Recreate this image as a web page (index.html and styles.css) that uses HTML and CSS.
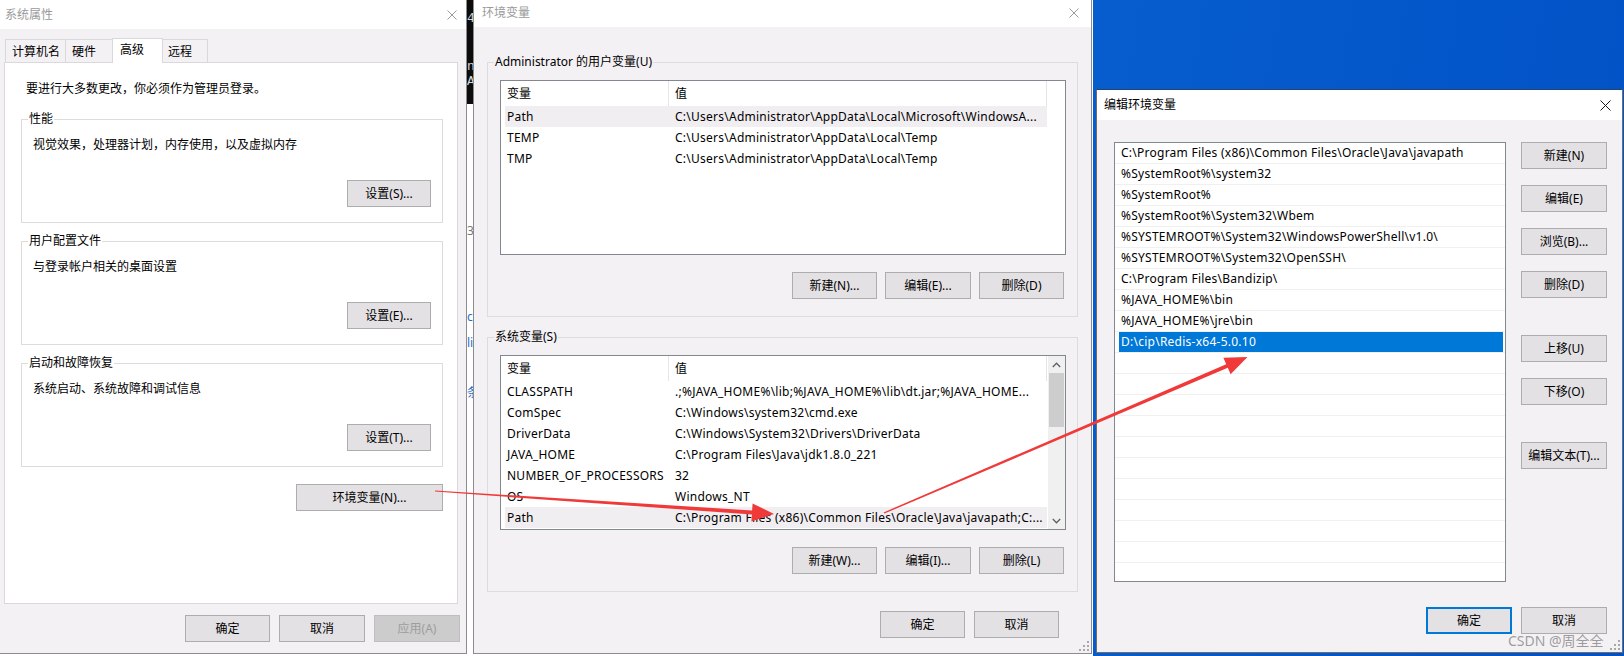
FILE: index.html
```html
<!DOCTYPE html>
<html lang="zh-CN">
<head>
<meta charset="utf-8">
<title>环境变量</title>
<link rel="stylesheet" href="styles.css">
</head>
<body>
<div class="backdrop"></div>
<div class="cmd"><span>4</span><span class="c2">@</span><span class="c3">n</span><span class="c4">A</span></div>
<div class="strip"><span class="s1">3</span><span class="s2">c</span><span class="s3">li</span><span class="s4">条</span></div>

<!-- 系统属性 -->
<div class="win w1">
  <div class="titlebar tb1">
    <span class="title inactive">系统属性</span>
    <svg class="close" width="10" height="10" viewBox="0 0 10 10"><path d="M0.5 0.5L9.5 9.5M9.5 0.5L0.5 9.5" stroke="#9a9a9a" stroke-width="1"/></svg>
  </div>
  <div class="body b1">
    <div class="tabs">
      <div class="tab t1">计算机名</div>
      <div class="tab t2">硬件</div>
      <div class="tab t3 sel">高级</div>
      <div class="tab t4">远程</div>
    </div>
    <div class="panel">
      <p class="intro">要进行大多数更改，你必须作为管理员登录。</p>
      <fieldset class="grp g1">
        <legend>性能</legend>
        <div class="gbody">
          <p class="desc">视觉效果，处理器计划，内存使用，以及虚拟内存</p>
          <button class="btn gbtn">设置(S)...</button>
        </div>
      </fieldset>
      <fieldset class="grp g1 gsp">
        <legend>用户配置文件</legend>
        <div class="gbody">
          <p class="desc">与登录帐户相关的桌面设置</p>
          <button class="btn gbtn">设置(E)...</button>
        </div>
      </fieldset>
      <fieldset class="grp g1 gsp">
        <legend>启动和故障恢复</legend>
        <div class="gbody">
          <p class="desc">系统启动、系统故障和调试信息</p>
          <button class="btn gbtn">设置(T)...</button>
        </div>
      </fieldset>
      <button class="btn envbtn">环境变量(N)...</button>
    </div>
    <div class="footer f1">
      <button class="btn w85">确定</button>
      <button class="btn w86">取消</button>
      <button class="btn w86 disabled">应用(A)</button>
    </div>
  </div>
</div>

<!-- 环境变量 -->
<div class="win w2">
  <div class="titlebar tb2">
    <span class="title inactive">环境变量</span>
    <svg class="close" width="10" height="10" viewBox="0 0 10 10"><path d="M0.5 0.5L9.5 9.5M9.5 0.5L0.5 9.5" stroke="#9a9a9a" stroke-width="1"/></svg>
  </div>
  <div class="body b2">
    <fieldset class="grp g2">
      <legend>Administrator 的用户变量(U)</legend>
      <div class="gbody2">
        <div class="lv">
          <div class="lv-main">
            <div class="lv-head"><span class="c1">变量</span><span class="c2">值</span></div>
            <div class="lv-row hl"><span class="c1">Path</span><span class="c2">C:\Users\Administrator\AppData\Local\Microsoft\WindowsA...</span></div>
            <div class="lv-row"><span class="c1">TEMP</span><span class="c2">C:\Users\Administrator\AppData\Local\Temp</span></div>
            <div class="lv-row"><span class="c1">TMP</span><span class="c2">C:\Users\Administrator\AppData\Local\Temp</span></div>
          </div>
        </div>
        <div class="btnrow">
          <button class="btn w85">新建(N)...</button>
          <button class="btn w86">编辑(E)...</button>
          <button class="btn w85">删除(D)</button>
        </div>
      </div>
    </fieldset>
    <fieldset class="grp g2 g2b">
      <legend>系统变量(S)</legend>
      <div class="gbody2">
        <div class="lv">
          <div class="lv-main">
            <div class="lv-head"><span class="c1">变量</span><span class="c2">值</span></div>
            <div class="lv-row"><span class="c1">CLASSPATH</span><span class="c2">.;%JAVA_HOME%\lib;%JAVA_HOME%\lib\dt.jar;%JAVA_HOME...</span></div>
            <div class="lv-row"><span class="c1">ComSpec</span><span class="c2">C:\Windows\system32\cmd.exe</span></div>
            <div class="lv-row"><span class="c1">DriverData</span><span class="c2">C:\Windows\System32\Drivers\DriverData</span></div>
            <div class="lv-row"><span class="c1">JAVA_HOME</span><span class="c2">C:\Program Files\Java\jdk1.8.0_221</span></div>
            <div class="lv-row"><span class="c1">NUMBER_OF_PROCESSORS</span><span class="c2">32</span></div>
            <div class="lv-row"><span class="c1">OS</span><span class="c2">Windows_NT</span></div>
            <div class="lv-row hl"><span class="c1">Path</span><span class="c2">C:\Program Files (x86)\Common Files\Oracle\Java\javapath;C:...</span></div>
          </div>
          <div class="vscroll">
            <div class="arrow"><svg width="9" height="6" viewBox="0 0 9 6"><path d="M0.8 5L4.5 1.2L8.2 5" fill="none" stroke="#606060" stroke-width="1.3"/></svg></div>
            <div class="thumb"></div>
            <div class="track"></div>
            <div class="arrow"><svg width="9" height="6" viewBox="0 0 9 6"><path d="M0.8 1L4.5 4.8L8.2 1" fill="none" stroke="#606060" stroke-width="1.3"/></svg></div>
          </div>
        </div>
        <div class="btnrow">
          <button class="btn w85">新建(W)...</button>
          <button class="btn w86">编辑(I)...</button>
          <button class="btn w85">删除(L)</button>
        </div>
      </div>
    </fieldset>
    <div class="footer f2">
      <button class="btn w85">确定</button>
      <button class="btn w85">取消</button>
    </div>
  </div>
  <svg class="grip" width="12" height="12" viewBox="0 0 12 12"><g fill="#a8a8a8"><rect x="9" y="1" width="2" height="2"/><rect x="9" y="5" width="2" height="2"/><rect x="5" y="5" width="2" height="2"/><rect x="9" y="9" width="2" height="2"/><rect x="5" y="9" width="2" height="2"/><rect x="1" y="9" width="2" height="2"/></g></svg>
</div>

<!-- 编辑环境变量 -->
<div class="win w3">
  <div class="titlebar tb3">
    <span class="title">编辑环境变量</span>
    <svg class="close" width="11" height="11" viewBox="0 0 11 11"><path d="M0.5 0.5L10.5 10.5M10.5 0.5L0.5 10.5" stroke="#1a1a1a" stroke-width="1"/></svg>
  </div>
  <div class="body b3">
    <div class="editrow">
      <div class="plist">
        <div class="pitem">C:\Program Files (x86)\Common Files\Oracle\Java\javapath</div>
        <div class="pitem">%SystemRoot%\system32</div>
        <div class="pitem">%SystemRoot%</div>
        <div class="pitem">%SystemRoot%\System32\Wbem</div>
        <div class="pitem">%SYSTEMROOT%\System32\WindowsPowerShell\v1.0\</div>
        <div class="pitem">%SYSTEMROOT%\System32\OpenSSH\</div>
        <div class="pitem">C:\Program Files\Bandizip\</div>
        <div class="pitem">%JAVA_HOME%\bin</div>
        <div class="pitem">%JAVA_HOME%\jre\bin</div>
        <div class="pitem selrow"><span class="seltext">D:\cip\Redis-x64-5.0.10</span></div>
        <div class="pitem"></div>
        <div class="pitem"></div>
        <div class="pitem"></div>
        <div class="pitem"></div>
        <div class="pitem"></div>
        <div class="pitem"></div>
        <div class="pitem"></div>
        <div class="pitem"></div>
        <div class="pitem"></div>
        <div class="pitem"></div>
        <div class="pitem"></div>
      </div>
      <div class="sidebtns">
        <button class="btn w86">新建(N)</button>
        <button class="btn w86 sgap">编辑(E)</button>
        <button class="btn w86 sgap">浏览(B)...</button>
        <button class="btn w86 sgap">删除(D)</button>
        <button class="btn w86 lgap">上移(U)</button>
        <button class="btn w86 sgap">下移(O)</button>
        <button class="btn w86 lgap">编辑文本(T)...</button>
      </div>
    </div>
    <div class="footer f3">
      <button class="btn w86 focus">确定</button>
      <button class="btn w86">取消</button>
    </div>
  </div>
  <svg class="grip" width="12" height="12" viewBox="0 0 12 12"><g fill="#a8a8a8"><rect x="9" y="1" width="2" height="2"/><rect x="9" y="5" width="2" height="2"/><rect x="5" y="5" width="2" height="2"/><rect x="9" y="9" width="2" height="2"/><rect x="5" y="9" width="2" height="2"/><rect x="1" y="9" width="2" height="2"/></g></svg>
</div>

<div class="watermark">CSDN @周全全</div>

<svg class="arrows" width="1624" height="656" viewBox="0 0 1624 656">
  <polygon fill="#f03a3a" points="435,490.4 752.1,510.5 752.6,503.5 774,514 751.4,521.5 751.9,514.5 435,491.6"/>
  <polygon fill="#f03a3a" points="883.6,512.4 1226.2,364.2 1223.4,357.7 1247.5,357 1230.6,374.3 1227.8,367.8 884.4,513.6"/>
</svg>
</body>
</html>
```
FILE: styles.css
```css
* { box-sizing: border-box; margin: 0; padding: 0; }
html, body { width: 1624px; height: 656px; overflow: hidden; }
body {
  position: relative;
  font-family: "Noto Sans", "Noto Sans CJK SC", sans-serif;
  font-size: 12px;
  color: #000;
  background: linear-gradient(100deg, #1776da 0%, #0b63d2 45%, #0051c5 100%);
}

.backdrop { position: absolute; left: 0; top: 0; width: 1093px; height: 656px; background: #fff; }
.cmd {
  position: absolute; left: 467px; top: 0; width: 6px; height: 104px;
  background: #0c0c0c; color: #d8d8d8; overflow: hidden;
  font-family: "Liberation Mono", monospace; font-size: 13px; line-height: 14px;
  display: flex; flex-direction: column;
}
.cmd span { margin-left: 0; }
.cmd span:first-child { margin-top: 12px; }
.cmd .c2 { margin-top: 17px; }
.cmd .c3 { margin-top: 3px; }
.cmd .c4 { margin-top: 1px; }
.strip {
  position: absolute; left: 467px; top: 104px; width: 6px; height: 552px;
  background: #fff; overflow: hidden; display: flex; flex-direction: column;
  font-size: 12px; line-height: 14px;
}
.strip span { margin-left: 0; }
.strip .s1 { margin-top: 120px; color: #777; }
.strip .s2 { margin-top: 72px; color: #1a6fd0; }
.strip .s3 { margin-top: 12px; color: #1a6fd0; }
.strip .s4 { margin-top: 36px; color: #1a6fd0; }

/* windows */
.win {
  position: absolute;
  display: flex; flex-direction: column;
  background: #f4f1f5;
  border: 1px solid #8c8c8c;
}
.w1 { left: -1px; top: -1px; width: 468px; height: 655px; }
.w2 { left: 473px; top: -3px; width: 619px; height: 657px; }
.w3 { left: 1096px; top: 89px; width: 527px; height: 564px; border-color: #6e6e6e; border-top-color: #24446e; }

.titlebar {
  display: flex; align-items: center; justify-content: space-between;
  background: #fff; flex: none;
}
.tb1 { height: 29px; padding: 0 9px 0 5px; }
.tb2 { height: 29px; padding: 0 12px 0 8px; }
.tb3 { height: 30px; padding: 0 11px 0 7px; }
.title { font-size: 12px; line-height: 16px; color: #000; }
.title.inactive { color: #9a9a9a; }
.close { display: block; }

.body { flex: 1; display: flex; flex-direction: column; }

/* buttons */
.btn {
  height: 27px;
  border: 1px solid #adadad;
  background: #e4e1e4;
  font-family: inherit; font-size: 12px; color: #000;
  display: flex; align-items: center; justify-content: center;
  line-height: 16px; padding: 0;
  flex: none;
}
.btn.disabled { background: #cccccc; border-color: #bfbfbf; color: #9d9d9d; }
.btn.focus { border: 2px solid #0078d7; }
.w85 { width: 85px; }
.w86 { width: 86px; }

/* window 1 */
.b1 { padding: 9px 6px 0 4px; }
.tabs { display: flex; align-items: flex-end; height: 24px; margin-left: 1px; }
.tab {
  height: 23px; border: 1px solid #d9d9d9; border-bottom: none;
  background: #f4f1f5; line-height: 16px; padding-top: 4px; padding-left: 6px;
  flex: none; position: relative;
}
.t1 { width: 61px; }
.t2 { width: 49px; margin-left: -1px; }
.t3 { width: 51px; margin-left: -2px; }
.t4 { width: 47px; margin-left: -2px; padding-left: 6px; }
.tab.sel {
  height: 25px; margin-bottom: -1px; background: #fff; z-index: 1;
  padding-top: 3px; padding-left: 7px;
}
.panel {
  width: 454px; height: 542px; flex: none;
  background: #fff; border: 1px solid #d9d9d9;
  padding: 0 14px 0 16px;
  display: flex; flex-direction: column;
}
.intro { margin: 18px 0 0 5px; line-height: 16px; }

.grp {
  border: 1px solid #dcdcdc;
  padding: 0; margin: 0;
  min-width: 0;
}
.grp legend {
  margin-left: 6px; padding: 0 1px;
  line-height: 16px; font-size: 12px;
}
.g1 { margin-top: 14px; }
.g1.gsp { margin-top: 10px; }
.gbody { display: flex; flex-direction: column; padding: 10px 11px 15px 11px; }
.desc { line-height: 16px; }
.gbtn { width: 84px; align-self: flex-end; margin-top: 27px; }
.envbtn { width: 147px; align-self: flex-end; margin-top: 17px; }

.footer { display: flex; justify-content: flex-end; gap: 9px; flex: none; }
.f1 { margin-top: 11px; }

/* window 2 */
.b2 { padding: 27px 13px 0 13px; }
.g2 { width: 591px; }
.g2b { margin-top: 12px; }
.gbody2 { padding: 10px 11px 17px 12px; }
.lv {
  height: 175px; border: 1px solid #828790; background: #fff;
  display: flex; overflow: hidden;
}
.lv-main { width: 547px; padding-left: 4px; flex: none; }
.lv-head { display: flex; height: 25px; line-height: 25px; }
.lv-head span { border-right: 1px solid #e5e5e5; }
.lv-row { display: flex; height: 21px; line-height: 21px; width: 542px; white-space: nowrap; letter-spacing: 0.25px; }
.lv-row.hl { background: #f1eef2; }
.c1 { width: 164px; padding-left: 2px; overflow: hidden; flex: none; white-space: nowrap; }
.c2 { width: 378px; padding-left: 6px; overflow: hidden; flex: none; white-space: nowrap; }
.vscroll { width: 17px; flex: none; display: flex; flex-direction: column; background: #f0f0f0; }
.vscroll .arrow { height: 17px; display: flex; align-items: center; justify-content: center; flex: none; }
.vscroll .thumb { height: 54px; margin: 0 1px; background: #cdcdcd; flex: none; }
.vscroll .track { flex: 1; }
.btnrow { display: flex; justify-content: flex-end; gap: 8px; margin-top: 17px; margin-right: 2px; }
.f2 { margin-top: 19px; padding-right: 19px; }

.grip { position: absolute; right: 1px; bottom: 1px; }

/* window 3 */
.b3 { padding: 22px 15px 0 17px; }
.editrow { display: flex; gap: 15px; }
.plist {
  width: 392px; height: 440px; border: 1px solid #828790; background: #fff;
  overflow: hidden; flex: none;
}
.pitem {
  height: 21px; line-height: 20px; border-bottom: 1px solid #f0f0f0;
  padding-left: 6px; white-space: nowrap; letter-spacing: 0.25px;
}
.pitem.selrow { padding-left: 4px; }
.seltext {
  display: block; height: 20px; width: 384px;
  background: #0078d7; color: #fff; padding-left: 2px;
}
.sidebtns { display: flex; flex-direction: column; width: 86px; }
.sgap { margin-top: 16px; }
.lgap { margin-top: 37px; }
.f3 { margin-top: 25px; }

.watermark {
  position: absolute; left: 1508px; top: 632px;
  font-family: "Noto Sans", "Noto Sans CJK SC", sans-serif;
  font-size: 14px; line-height: 18px; color: rgba(140, 140, 140, 0.85);
  white-space: nowrap;
}

.arrows { position: absolute; left: 0; top: 0; pointer-events: none; }
```
